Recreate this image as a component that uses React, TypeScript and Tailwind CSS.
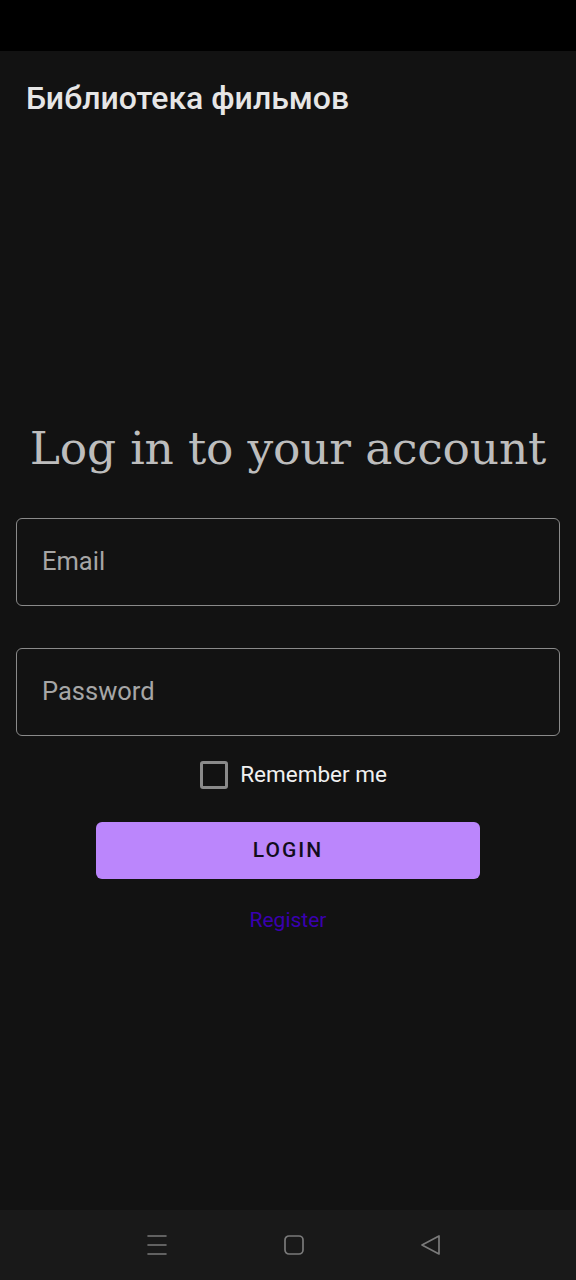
export default function App() {
  return (
    <div className="w-[576px] h-[1280px] bg-[#121212] flex flex-col" style={{ fontFamily: "Roboto, 'Noto Sans', sans-serif" }}>
      {/* Status bar */}
      <div className="h-[51px] bg-black shrink-0" />

      {/* App bar */}
      <div className="h-[94px] flex items-center px-[26px] shrink-0">
        <h1 className="text-[32px] font-medium text-[#e6e6e6] leading-none">Библиотека фильмов</h1>
      </div>

      {/* Content */}
      <div className="flex-1 flex flex-col items-center px-[16px] pt-[281px]">
        <h2
          className="text-[45.5px] text-[#bdbdbd] leading-none text-center tracking-[-0.2px]"
          style={{ fontFamily: "'DejaVu Serif', 'Liberation Serif', serif" }}
        >
          Log in to your account
        </h2>

        <div className="w-full mt-[46px] h-[88px] rounded-[6px] border-[1.5px] border-[#8a8a8a] flex items-center px-[25px]">
          <span className="text-[25.5px] text-[#a6a6a6]">Email</span>
        </div>

        <div className="w-full mt-[42px] h-[88px] rounded-[6px] border-[1.5px] border-[#8a8a8a] flex items-center px-[25px]">
          <span className="text-[25.5px] text-[#a6a6a6]">Password</span>
        </div>

        <div className="mt-[24px] ml-[11px] flex items-center gap-[12px]">
          <div className="w-[28px] h-[28px] rounded-[3px] border-[3px] border-[#8a8a8a]" />
          <span className="text-[22.5px] text-[#f0f0f0] -mt-[2px]">Remember me</span>
        </div>

        <button className="mt-[31px] w-[384px] h-[57px] rounded-[6px] bg-[#bb86fc] text-[21px] font-medium tracking-[2px] text-[#120d1c]">
          LOGIN
        </button>

        <span className="mt-[26px] text-[21px] text-[#3a00b0]">Register</span>
      </div>

      {/* Nav bar */}
      <div className="h-[70px] bg-[#191919] shrink-0 flex items-center justify-center gap-[117px] pl-[11px]">
        <svg width="20" height="20" viewBox="0 0 20 20" fill="none" stroke="#7a7a7a" strokeWidth="1.6" strokeLinecap="round">
          <path d="M1 1h18M1 10h18M1 19h18" />
        </svg>
        <svg width="20" height="20" viewBox="0 0 20 20" fill="none" stroke="#7a7a7a" strokeWidth="1.7">
          <rect x="1" y="1" width="18" height="18" rx="4" />
        </svg>
        <svg width="20" height="20" viewBox="0 0 20 20" fill="none" stroke="#7a7a7a" strokeWidth="1.7" strokeLinejoin="round">
          <path d="M18 1v18L1 10z" />
        </svg>
      </div>
    </div>
  );
}
